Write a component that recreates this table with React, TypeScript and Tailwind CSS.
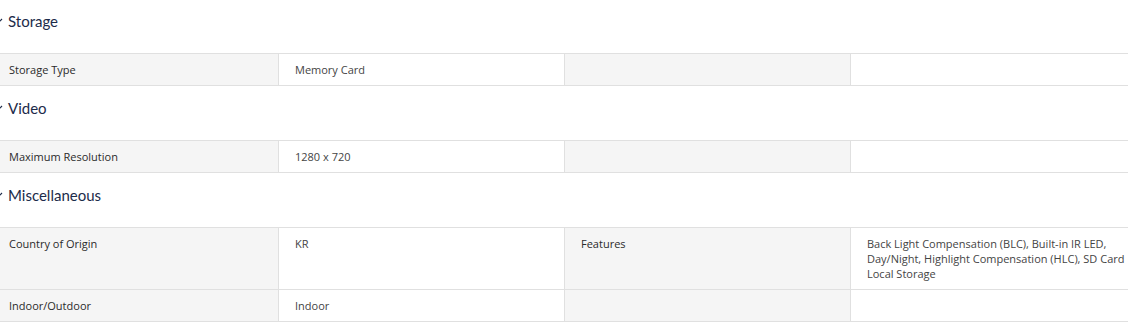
import React from "react";

type Cell = { label: string; value?: string[] };
type Row = [Cell, Cell?];
type Section = { title: string; rows: Row[] };

const sections: Section[] = [
  {
    title: "Storage",
    rows: [[{ label: "Storage Type", value: ["Memory Card"] }]],
  },
  {
    title: "Video",
    rows: [[{ label: "Maximum Resolution", value: ["1280 x 720"] }]],
  },
  {
    title: "Miscellaneous",
    rows: [
      [
        { label: "Country of Origin", value: ["KR"] },
        {
          label: "Features",
          value: [
            "Back Light Compensation (BLC), Built-in IR LED,",
            "Day/Night, Highlight Compensation (HLC), SD Card",
            "Local Storage",
          ],
        },
      ],
      [{ label: "Indoor/Outdoor", value: ["Indoor"] }],
    ],
  },
];

function Chevron() {
  return (
    <svg width="10" height="6" viewBox="0 0 10 6" className="ml-[1px] shrink-0" fill="none">
      <path d="M1 1l4 4 4-4" stroke="#1c2b4a" strokeWidth="1.2" />
    </svg>
  );
}

function LabelCell({ text, first }: { text?: string; first?: boolean }) {
  return (
    <div
      className={`bg-[#f5f5f5] border-r border-[#e0e0e0] ${first ? "pl-[17px]" : "pl-4"} pr-4 py-[8px] text-[11px] leading-[15px] text-[#2b2b2b] font-['Open_Sans',sans-serif]`}
    >
      {text}
    </div>
  );
}

function ValueCell({ lines, last }: { lines?: string[]; last?: boolean }) {
  return (
    <div
      className={`bg-white ${last ? "" : "border-r border-[#e0e0e0]"} pl-4 pr-2 py-[8px] text-[11px] leading-[15px] text-[#444] font-['Open_Sans',sans-serif]`}
    >
      {lines?.map((l) => (
        <div key={l} className="whitespace-nowrap">
          {l}
        </div>
      ))}
    </div>
  );
}

export default function App() {
  return (
    <div className="w-[1128px] h-[335px] overflow-hidden bg-white">
      <div className="ml-[-8px] w-[1136px] mt-[-1px]">
        {sections.map((s) => (
          <section key={s.title}>
            <div className="flex items-center gap-[5px] pt-[10px] h-[34px] mb-[20px]">
              <Chevron />
              <h2 className="text-[15px] leading-[24px] text-[#1c2b4a] font-['Lato',sans-serif] font-normal">
                {s.title}
              </h2>
            </div>
            <div className="border-t border-[#e0e0e0]">
              {s.rows.map((r, i) => (
                <div
                  key={i}
                  className="grid grid-cols-[287px_286px_286px_1fr] border-b border-[#e0e0e0]"
                >
                  <LabelCell text={r[0].label} first />
                  <ValueCell lines={r[0].value} />
                  <LabelCell text={r[1]?.label} />
                  <ValueCell lines={r[1]?.value} last />
                </div>
              ))}
            </div>
          </section>
        ))}
      </div>
    </div>
  );
}
